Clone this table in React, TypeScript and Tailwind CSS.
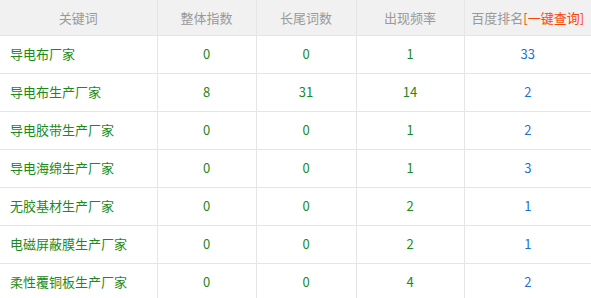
const rows = [
  ["导电布厂家", "0", "0", "1", "33"],
  ["导电布生产厂家", "8", "31", "14", "2"],
  ["导电胶带生产厂家", "0", "0", "1", "2"],
  ["导电海绵生产厂家", "0", "0", "1", "3"],
  ["无胶基材生产厂家", "0", "0", "2", "1"],
  ["电磁屏蔽膜生产厂家", "0", "0", "2", "1"],
  ["柔性覆铜板生产厂家", "0", "0", "4", "2"],
];

export default function App() {
  return (
    <div className="w-[591px] h-[298px] overflow-hidden bg-white font-['Microsoft_YaHei','Noto_Sans_CJK_SC',sans-serif] text-[13px]">
      <table className="w-[591px] table-fixed border-collapse">
        <colgroup>
          <col className="w-[157px]" />
          <col className="w-[99px]" />
          <col className="w-[100px]" />
          <col className="w-[108px]" />
          <col className="w-[127px]" />
        </colgroup>
        <thead>
          <tr className="h-[35px] bg-[#f1f1f1] text-[#999] border-b border-[#e5e5e5]">
            <th className="font-normal border-r border-[#e5e5e5]">关键词</th>
            <th className="font-normal border-r border-[#e5e5e5]">整体指数</th>
            <th className="font-normal border-r border-[#e5e5e5]">长尾词数</th>
            <th className="font-normal border-r border-[#e5e5e5]">出现频率</th>
            <th className="font-normal">
              百度排名<span className="text-[#ff4400]">[一键查询]</span>
            </th>
          </tr>
        </thead>
        <tbody>
          {rows.map((r) => (
            <tr key={r[0]} className="h-[38px] border-b border-[#e5e5e5]">
              <td className="pl-[10px] text-[#1a8a1a] border-r border-[#e5e5e5]">{r[0]}</td>
              <td className="text-center text-[#1a8a1a] border-r border-[#e5e5e5]">{r[1]}</td>
              <td className="text-center text-[#1a8a1a] border-r border-[#e5e5e5]">{r[2]}</td>
              <td className="text-center text-[#1a8a1a] border-r border-[#e5e5e5]">{r[3]}</td>
              <td className="text-center text-[#1a73d9]">{r[4]}</td>
            </tr>
          ))}
        </tbody>
      </table>
    </div>
  );
}
